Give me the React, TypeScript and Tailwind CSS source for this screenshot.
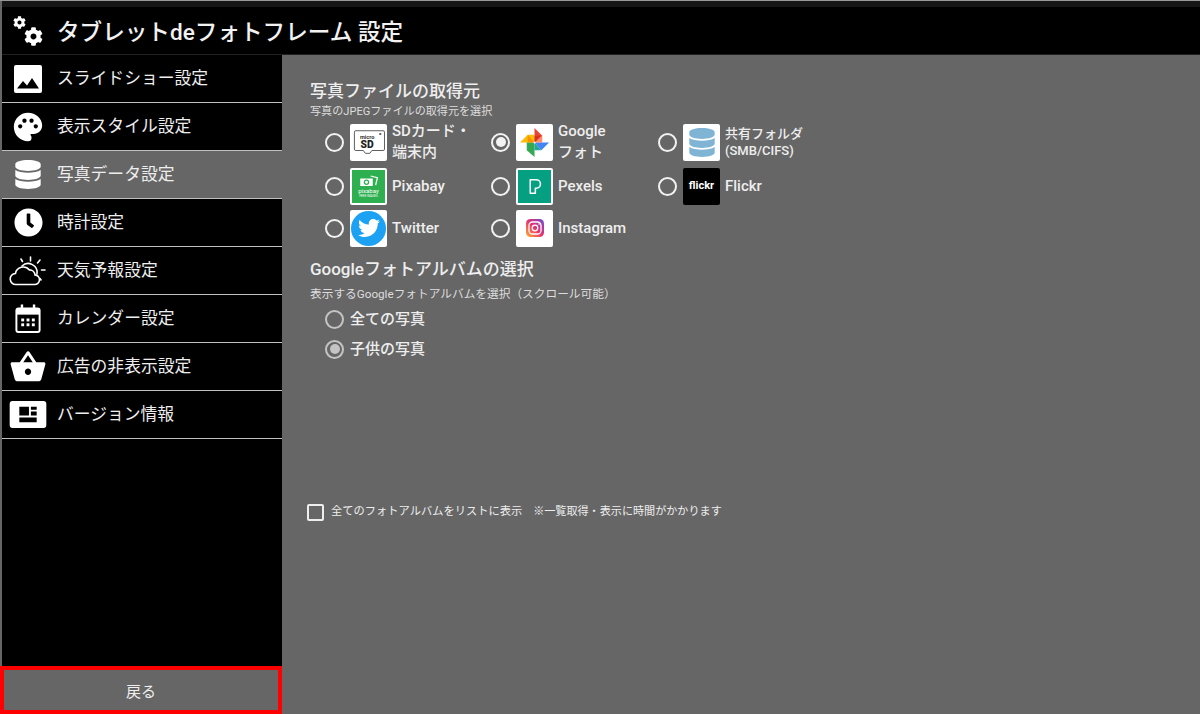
import { ReactNode } from "react";
import { FaCog, FaDatabase, FaTwitter, FaClock } from "react-icons/fa";
import { MdPalette, MdShoppingBasket } from "react-icons/md";

const ImageIcon = () => (
  <svg viewBox="0 0 28 28" className="w-[28px] h-[28px]">
    <rect width="28" height="28" rx="2" fill="#fff" />
    <path d="M3 23.500 9 16l4 4.500 5-7.500 7 10.500z" fill="#000" />
  </svg>
);

const WeatherIcon = () => (
  <svg viewBox="0 0 38 30" className="w-[38px] h-[30px]" fill="none" stroke="#fff" strokeWidth="1.600" strokeLinecap="round">
    <path d="M7 28.500a5.500 5.500 0 0 1-.6-11 8 8 0 0 1 14-3.600 5.500 5.500 0 0 1 5.600 5 4.800 4.800 0 0 1-.6 9.600z" />
    <path d="M13 10a9 9 0 0 1 15 8" />
    <path d="M21.500 1v4M31 4l-2.500 3M36 14h-3.500M32 24l-1-1.500M12 3l1.500 2.500" />
  </svg>
);

const CalendarIcon = () => (
  <svg viewBox="0 0 26 30" className="w-[26px] h-[29px]">
    <path d="M1 6.500a2 2 0 0 1 2-2h20a2 2 0 0 1 2 2V27a2 2 0 0 1-2 2H3a2 2 0 0 1-2-2z" fill="none" stroke="#fff" strokeWidth="2" />
    <path d="M1 5h24v6H1z" fill="#fff" />
    <rect x="5.500" y="0.500" width="2.500" height="5" fill="#fff" />
    <rect x="18" y="0.500" width="2.500" height="5" fill="#fff" />
    {[6, 11.5, 17].map((x) =>
      [15, 20].map((y) => <rect key={`${x}-${y}`} x={x} y={y} width="3" height="3" fill="#fff" />)
    )}
  </svg>
);

const NewsIcon = () => (
  <svg viewBox="0 0 38 28" className="w-[38px] h-[27px]">
    <rect width="38" height="28" rx="3" fill="#fff" />
    <path d="M10 6h10v9H10zM22 6h6v3h-6zM22 11h6v4h-6zM10 17h18v5H10z" fill="#000" />
  </svg>
);

const GearsIcon = () => (
  <span className="flex items-start">
    <FaCog className="w-[13px] h-[13px]" />
    <FaCog className="w-[19px] h-[19px] mt-[11px] -ml-[2px]" />
  </span>
);

const sideItems: { label: string; icon: ReactNode; active?: boolean }[] = [
  { label: "スライドショー設定", icon: <ImageIcon /> },
  { label: "表示スタイル設定", icon: <MdPalette className="w-[34px] h-[34px]" /> },
  { label: "写真データ設定", icon: <FaDatabase className="w-[26px] h-[29px]" />, active: true },
  { label: "時計設定", icon: <FaClock className="w-[29px] h-[29px]" /> },
  { label: "天気予報設定", icon: <WeatherIcon /> },
  { label: "カレンダー設定", icon: <CalendarIcon /> },
  { label: "広告の非表示設定", icon: <MdShoppingBasket className="w-[38px] h-[38px]" /> },
  { label: "バージョン情報", icon: <NewsIcon /> },
];

const Radio = ({ checked, muted }: { checked?: boolean; muted?: boolean }) => (
  <span
    className={`flex items-center justify-center w-[19px] h-[19px] rounded-full border-2 shrink-0 ${
      muted ? "border-[#c4c4c4]" : "border-[#f2f2f2]"
    }`}
  >
    {checked && <span className={`w-[10px] h-[10px] rounded-full ${muted ? "bg-[#c4c4c4]" : "bg-[#f2f2f2]"}`} />}
  </span>
);

const Tile = ({ children, className = "bg-white" }: { children: ReactNode; className?: string }) => (
  <span className={`flex items-center justify-center w-[37px] h-[37px] rounded-[2px] shrink-0 overflow-hidden ${className}`}>
    {children}
  </span>
);

const SdIcon = () => (
  <svg viewBox="0 0 34 28" className="w-[32px] h-[27px]">
    <path d="M1.500 3a1.500 1.500 0 0 1 1.500-1.500h29a1.500 1.500 0 0 1 1.500 1.500v18a1.500 1.500 0 0 1-1.500 1.500H20l-2 3h-5l-2-3H3a1.500 1.500 0 0 1-1.500-1.500z" fill="#fff" stroke="#555" strokeWidth="1" />
    <rect x="28" y="4" width="2" height="2" fill="#555" />
    <text x="15" y="10" textAnchor="middle" fontSize="6" fontWeight="700" fill="#333">micro</text>
    <text x="15" y="20" textAnchor="middle" fontSize="11" fontWeight="900" fill="#222">SD</text>
  </svg>
);

const PhotosIcon = () => (
  <svg viewBox="0 0 32 32" className="w-[31px] h-[31px]">
    <path d="M16 16V1l8 8z" fill="#ea4335" />
    <path d="M16 16h15l-8 8z" fill="#4285f4" />
    <path d="M16 16H1l8-8h7z" fill="#fbbc05" />
    <path d="M16 16v15l-8-7v-8z" fill="#34a853" />
    <path d="M16 16V9h8z" fill="#d93025" />
    <path d="M16 16h8v-7h-1z" fill="#ff7043" opacity="0.8" />
    <path d="M16 16h-7v-8z" fill="#fb8c00" opacity="0.9" />
    <path d="M16 16v8h7z" fill="#26a69a" />
    <circle cx="16" cy="16" r="1" fill="#fff" />
  </svg>
);

const PixabayIcon = () => (
  <span className="flex flex-col items-center justify-center w-[33px] h-[33px] bg-[#2eb050] text-white leading-none">
    <svg viewBox="0 0 24 14" className="w-[20px] h-[12px]" fill="none" stroke="#fff" strokeWidth="1.500">
      <rect x="1.500" y="4" width="15" height="9" fill="#fff" stroke="none" />
      <circle cx="9" cy="8.500" r="2.500" stroke="#2eb050" />
      <path d="M14 1l8 2-2 9" />
    </svg>
    <span className="text-[6px] mt-[1px]">pixabay</span>
    <span className="text-[3px] mt-[1px]">FREE IMAGES</span>
  </span>
);

const PexelsIcon = () => (
  <span className="flex items-center justify-center w-[33px] h-[33px] bg-[#05a081]">
    <svg viewBox="0 0 20 20" className="w-[17px] h-[17px]" fill="none" stroke="#fff" strokeWidth="1.800" strokeLinejoin="round">
      <path d="M5 2h7a5 5 0 0 1 5 5v0a5 5 0 0 1-5 5h-1v6H5z" />
    </svg>
  </span>
);

const InstagramIcon = () => (
  <svg viewBox="0 0 18 18" className="w-[18px] h-[18px]">
    <defs>
      <linearGradient id="ig" x1="0" y1="1" x2="1" y2="0">
        <stop offset="0" stopColor="#fdb232" />
        <stop offset="0.5" stopColor="#e8316f" />
        <stop offset="1" stopColor="#6a4cd6" />
      </linearGradient>
    </defs>
    <rect width="18" height="18" rx="4.500" fill="url(#ig)" />
    <rect x="3" y="3" width="12" height="12" rx="3.500" fill="none" stroke="#fff" strokeWidth="1.300" />
    <circle cx="9" cy="9" r="2.800" fill="none" stroke="#fff" strokeWidth="1.300" />
    <circle cx="13" cy="5" r="0.800" fill="#fff" />
  </svg>
);

const sources: { lines: string[]; icon: ReactNode; tile?: string; checked?: boolean; small?: boolean }[] = [
  { lines: ["SDカード・", "端末内"], icon: <SdIcon /> },
  { lines: ["Google", "フォト"], icon: <PhotosIcon />, checked: true },
  { lines: ["共有フォルダ", "(SMB/CIFS)"], icon: <FaDatabase className="w-[26px] h-[29px] text-[#7fb4d4]" />, small: true },
  { lines: ["Pixabay"], icon: <PixabayIcon /> },
  { lines: ["Pexels"], icon: <PexelsIcon /> },
  {
    lines: ["Flickr"],
    icon: <span className="text-[11px] font-bold text-white">flickr</span>,
    tile: "bg-black",
  },
  {
    lines: ["Twitter"],
    icon: (
      <span className="flex items-center justify-center w-[35px] h-[35px] rounded-full bg-[#1da1f2]">
        <FaTwitter className="w-[22px] h-[22px] text-white" />
      </span>
    ),
  },
  { lines: ["Instagram"], icon: <InstagramIcon /> },
];

export default function App() {
  return (
    <div className="w-[1200px] h-[714px] overflow-hidden flex flex-col bg-[#666666] text-white font-['Roboto','Noto_Sans_CJK_JP',sans-serif]">
      <div className="h-[1px] bg-[#999999]" />
      <div className="h-[6px] ml-[2px] bg-[#161616]" />
      <header className="h-[48px] ml-[2px] flex items-center bg-black border-b border-[#222222]">
        <span className="flex justify-center w-[52px]">
          <GearsIcon />
        </span>
        <h1 className="ml-[3px] pt-[4px] text-[22.6px] font-medium text-[#f2f2f2]">タブレットdeフォトフレーム 設定</h1>
      </header>
      <div className="flex-1 flex min-h-0">
        <aside className="w-[282px] flex flex-col">
          <nav className="flex-1 ml-[2px] bg-black">
            {sideItems.map((item) => (
              <div
                key={item.label}
                className={`flex items-center gap-[3px] h-[48px] border-b border-[#c0c0c0] ${item.active ? "bg-[#666666]" : ""}`}
              >
                <span className="flex items-center justify-center w-[52px] text-white">{item.icon}</span>
                <span className="text-[16.8px] text-[#eeeeee]">{item.label}</span>
              </div>
            ))}
          </nav>
          <button className="h-[48px] border-4 border-[#ff0000] bg-[#666666] pt-[4px] text-[15px] text-[#eeeeee]">戻る</button>
        </aside>
        <main className="flex-1 pl-[28px] pt-[26px] text-[#eeeeee]">
          <h2 className="text-[17px] font-medium leading-[20px]">写真ファイルの取得元</h2>
          <p className="text-[11.1px] leading-[14px] mt-[4px] text-[#dddddd]">写真のJPEGファイルの取得元を選択</p>
          <div className="grid grid-cols-[166px_167px_166px] grid-rows-[46px_42px_42px] ml-[15px]">
            {sources.map((s) => (
              <div key={s.lines[0]} className="flex items-center">
                <Radio checked={s.checked} />
                <span className="ml-[6px]">
                  <Tile className={s.tile}>{s.icon}</Tile>
                </span>
                <span className={`ml-[5px] font-medium ${s.small ? "text-[13px] leading-[17px]" : "text-[15px] leading-[21px]"}`}>
                  {s.lines.map((line) => (
                    <span key={line} className="block">
                      {line}
                    </span>
                  ))}
                </span>
              </div>
            ))}
          </div>
          <h2 className="mt-[10px] text-[17px] font-medium leading-[20px]">Googleフォトアルバムの選択</h2>
          <p className="mt-[8px] text-[11.7px] leading-[14px] text-[#dddddd]">表示するGoogleフォトアルバムを選択（スクロール可能）</p>
          <div className="ml-[15px] mt-[3px]">
            <div className="flex items-center gap-[6px] h-[30px]">
              <Radio muted />
              <span className="text-[15px] font-medium">全ての写真</span>
            </div>
            <div className="flex items-center gap-[6px] h-[30px]">
              <Radio muted checked />
              <span className="text-[15px] font-medium">子供の写真</span>
            </div>
          </div>
          <div className="flex items-center mt-[140px] -ml-[3px] text-[11.25px]">
            <span className="w-[17px] h-[17px] rounded-[2px] border-2 border-[#eeeeee]" />
            <span className="ml-[7px]">全てのフォトアルバムをリストに表示</span>
            <span className="ml-[11px] text-[11.1px]">※一覧取得・表示に時間がかかります</span>
          </div>
        </main>
      </div>
    </div>
  );
}
